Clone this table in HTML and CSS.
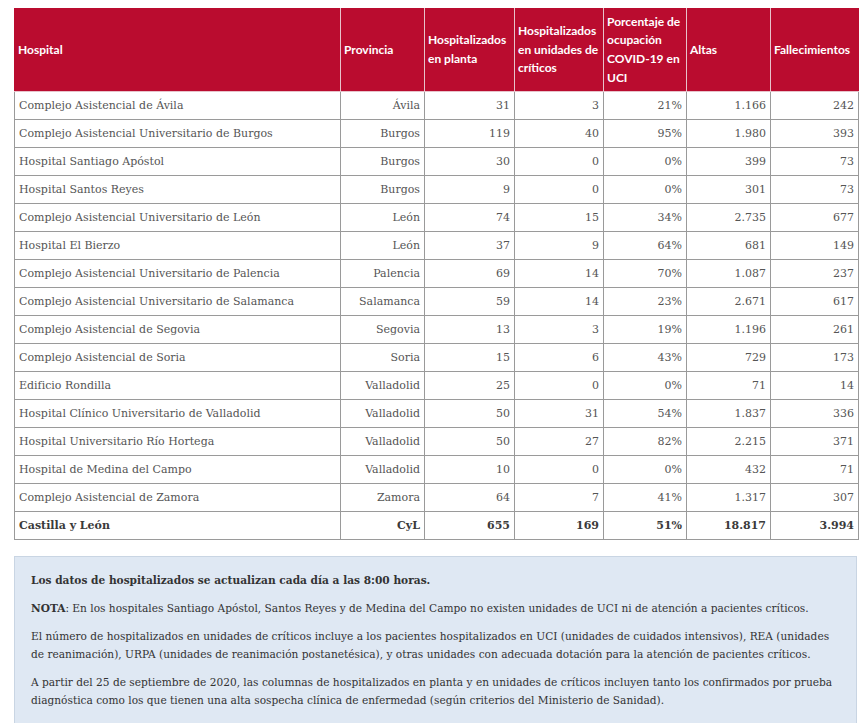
FILE: index.html
```html
<!DOCTYPE html>
<html lang="es">
<head>
<meta charset="utf-8">
<title>Hospitalizados COVID-19 Castilla y León</title>
<link rel="stylesheet" href="styles.css">
</head>
<body>
<div class="page">
  <table class="data">
    <colgroup>
      <col class="c-hosp"><col class="c-prov"><col class="c-num1"><col class="c-num2"><col class="c-num3"><col class="c-num4"><col class="c-num5">
    </colgroup>
    <thead>
      <tr>
        <th>Hospital</th>
        <th>Provincia</th>
        <th>Hospitalizados en planta</th>
        <th>Hospitalizados en unidades de críticos</th>
        <th>Porcentaje de ocupación COVID-19 en UCI</th>
        <th>Altas</th>
        <th>Fallecimientos</th>
      </tr>
    </thead>
    <tbody>
      <tr><td>Complejo Asistencial de Ávila</td><td class="r">Ávila</td><td class="r">31</td><td class="r">3</td><td class="r">21%</td><td class="r">1.166</td><td class="r">242</td></tr>
      <tr><td>Complejo Asistencial Universitario de Burgos</td><td class="r">Burgos</td><td class="r">119</td><td class="r">40</td><td class="r">95%</td><td class="r">1.980</td><td class="r">393</td></tr>
      <tr><td>Hospital Santiago Apóstol</td><td class="r">Burgos</td><td class="r">30</td><td class="r">0</td><td class="r">0%</td><td class="r">399</td><td class="r">73</td></tr>
      <tr><td>Hospital Santos Reyes</td><td class="r">Burgos</td><td class="r">9</td><td class="r">0</td><td class="r">0%</td><td class="r">301</td><td class="r">73</td></tr>
      <tr><td>Complejo Asistencial Universitario de León</td><td class="r">León</td><td class="r">74</td><td class="r">15</td><td class="r">34%</td><td class="r">2.735</td><td class="r">677</td></tr>
      <tr><td>Hospital El Bierzo</td><td class="r">León</td><td class="r">37</td><td class="r">9</td><td class="r">64%</td><td class="r">681</td><td class="r">149</td></tr>
      <tr><td>Complejo Asistencial Universitario de Palencia</td><td class="r">Palencia</td><td class="r">69</td><td class="r">14</td><td class="r">70%</td><td class="r">1.087</td><td class="r">237</td></tr>
      <tr><td>Complejo Asistencial Universitario de Salamanca</td><td class="r">Salamanca</td><td class="r">59</td><td class="r">14</td><td class="r">23%</td><td class="r">2.671</td><td class="r">617</td></tr>
      <tr><td>Complejo Asistencial de Segovia</td><td class="r">Segovia</td><td class="r">13</td><td class="r">3</td><td class="r">19%</td><td class="r">1.196</td><td class="r">261</td></tr>
      <tr><td>Complejo Asistencial de Soria</td><td class="r">Soria</td><td class="r">15</td><td class="r">6</td><td class="r">43%</td><td class="r">729</td><td class="r">173</td></tr>
      <tr><td>Edificio Rondilla</td><td class="r">Valladolid</td><td class="r">25</td><td class="r">0</td><td class="r">0%</td><td class="r">71</td><td class="r">14</td></tr>
      <tr><td>Hospital Clínico Universitario de Valladolid</td><td class="r">Valladolid</td><td class="r">50</td><td class="r">31</td><td class="r">54%</td><td class="r">1.837</td><td class="r">336</td></tr>
      <tr><td>Hospital Universitario Río Hortega</td><td class="r">Valladolid</td><td class="r">50</td><td class="r">27</td><td class="r">82%</td><td class="r">2.215</td><td class="r">371</td></tr>
      <tr><td>Hospital de Medina del Campo</td><td class="r">Valladolid</td><td class="r">10</td><td class="r">0</td><td class="r">0%</td><td class="r">432</td><td class="r">71</td></tr>
      <tr><td>Complejo Asistencial de Zamora</td><td class="r">Zamora</td><td class="r">64</td><td class="r">7</td><td class="r">41%</td><td class="r">1.317</td><td class="r">307</td></tr>
      <tr class="total"><td>Castilla y León</td><td class="r">CyL</td><td class="r">655</td><td class="r">169</td><td class="r">51%</td><td class="r">18.817</td><td class="r">3.994</td></tr>
    </tbody>
  </table>

  <div class="notes">
    <p><strong>Los datos de hospitalizados se actualizan cada día a las 8:00 horas.</strong></p>
    <p><strong>NOTA</strong>: En los hospitales Santiago Apóstol, Santos Reyes y de Medina del Campo no existen unidades de UCI ni de atención a pacientes críticos.</p>
    <p>El número de hospitalizados en unidades de críticos incluye a los pacientes hospitalizados en UCI (unidades de cuidados intensivos), REA (unidades de reanimación), URPA (unidades de reanimación postanetésica), y otras unidades con adecuada dotación para la atención de pacientes críticos.</p>
    <p>A partir del 25 de septiembre de 2020, las columnas de hospitalizados en planta y en unidades de críticos incluyen tanto los confirmados por prueba diagnóstica como los que tienen una alta sospecha clínica de enfermedad (según criterios del Ministerio de Sanidad).</p>
  </div>
</div>
</body>
</html>
```

FILE: styles.css
```css
html, body {
  margin: 0;
  padding: 0;
  background: #ffffff;
}

body {
  font-family: "DejaVu Serif", "Liberation Serif", serif;
  color: #555555;
}

.page {
  padding: 8px 6px 0 14px;
}

.data {
  border-collapse: collapse;
  table-layout: fixed;
  width: 844px;
}

.c-hosp { width: 326px; }
.c-prov { width: 84px; }
.c-num1 { width: 90px; }
.c-num2 { width: 89px; }
.c-num3 { width: 83px; }
.c-num4 { width: 84px; }
.c-num5 { width: 88px; }

.data th {
  background: #ba0c2f;
  color: #ffffff;
  font-family: Lato, "Liberation Sans", sans-serif;
  font-weight: 700;
  font-size: 12px;
  line-height: 18.7px;
  text-align: left;
  vertical-align: middle;
  padding: 2px 3px;
  height: 78px;
  border: 1px solid #e7c3cb;
  border-top-color: #ba0c2f;
}

.data th:first-child { border-left-color: #ba0c2f; }
.data th:last-child { border-right-color: #ba0c2f; }

.data td {
  font-size: 11px;
  height: 27px;
  padding: 0 4px 0 4px;
  border: 1px solid #9a9a9a;
  vertical-align: middle;
  white-space: nowrap;
}

.data td.r { text-align: right; }

.data tr.total td {
  font-weight: 700;
  color: #3a3a3a;
}

.notes {
  margin-top: 16px;
  width: 809px;
  background: #dfe8f3;
  border: 1px solid #c9d5e3;
  padding: 14px 16px 24px 16px;
  font-size: 10.6px;
  line-height: 18px;
  color: #333333;
}

.notes p {
  margin: 0 0 10px 0;
}

.notes strong {
  font-weight: 700;
}
```
